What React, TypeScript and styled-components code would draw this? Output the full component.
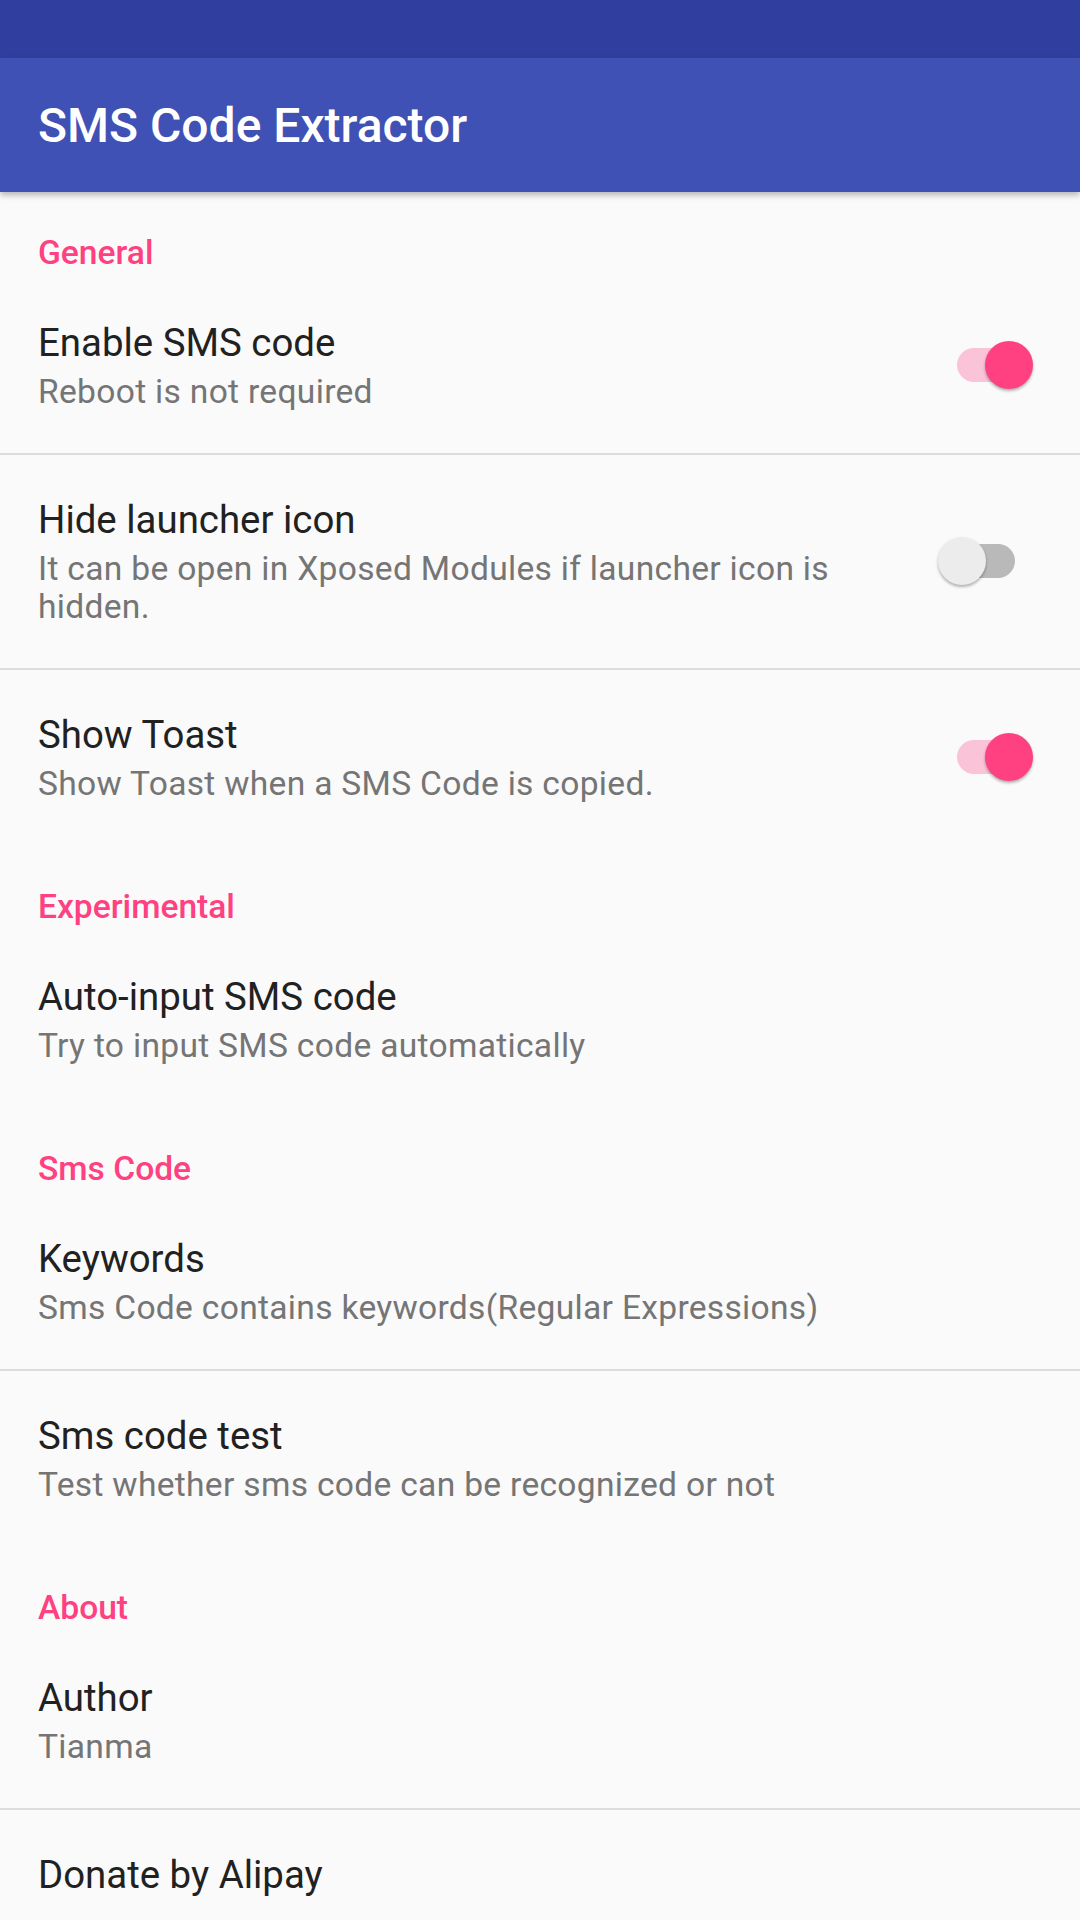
import React from 'react';
import styled, {createGlobalStyle} from 'styled-components';

const GlobalStyle = createGlobalStyle`
  html, body {
    margin: 0;
    padding: 0;
    background: #fafafa;
  }
  body {
    font-family: Roboto, "Noto Sans", "Liberation Sans", sans-serif;
  }
`;

const Screen = styled.div`
  display: flex;
  flex-direction: column;
  width: 1080px;
  height: 1920px;
  overflow: hidden;
  background: #fafafa;
`;

const StatusBar = styled.div`
  height: 58px;
  background: #303f9f;
  flex-shrink: 0;
`;

const Toolbar = styled.div`
  display: flex;
  align-items: center;
  height: 134px;
  padding: 0 38px;
  background: #3f51b5;
  box-shadow: 0 3px 6px rgba(0, 0, 0, 0.28);
  position: relative;
  z-index: 1;
  flex-shrink: 0;
`;

const Title = styled.div`
  color: #fff;
  font-size: 48px;
  font-weight: 500;
`;

const List = styled.div`
  display: flex;
  flex-direction: column;
`;

const Category = styled.div`
  padding: 44px 38px 7px;
  font-size: 33.6px;
  line-height: 34px;
  font-weight: 500;
  color: #ff4081;
`;

const Row = styled.div`
  display: flex;
  align-items: center;
  padding: 42px 47px 43px 38px;
`;

const Texts = styled.div`
  display: flex;
  flex-direction: column;
  flex: 1;
  min-width: 0;
`;

const ItemTitle = styled.div`
  font-size: 38.4px;
  line-height: 48px;
  color: #212121;
`;

const Summary = styled.div`
  margin-top: 6px;
  font-size: 33.6px;
  line-height: 38px;
  letter-spacing: 0.3px;
  color: #757575;
`;

const Divider = styled.div`
  height: 2px;
  margin-top: -1px;
  margin-bottom: -1px;
  background: #dcdcdc;
`;

const SwitchBox = styled.div`
  position: relative;
  width: 95px;
  height: 48px;
  margin-left: 32px;
  flex-shrink: 0;
`;

const Track = styled.div<{$on: boolean}>`
  position: absolute;
  left: 19px;
  top: 7px;
  width: 58px;
  height: 34px;
  border-radius: 17px;
  background: ${(p) => (p.$on ? '#fac3d7' : '#b9b9b9')};
`;

const Thumb = styled.div<{$on: boolean}>`
  position: absolute;
  top: 0;
  left: ${(p) => (p.$on ? '47px' : '0')};
  width: 48px;
  height: 48px;
  border-radius: 50%;
  background: ${(p) => (p.$on ? '#ff4081' : '#ececec')};
  box-shadow: 0 2px 3px rgba(0, 0, 0, 0.3);
`;

const Switch = ({on}: {on: boolean}) => (
  <SwitchBox>
    <Track $on={on} />
    <Thumb $on={on} />
  </SwitchBox>
);

type Item = {title: string; summary?: string; toggle?: boolean};
type Section = {name: string; items: Item[]};

const sections: Section[] = [
  {
    name: 'General',
    items: [
      {title: 'Enable SMS code', summary: 'Reboot is not required', toggle: true},
      {title: 'Hide launcher icon', summary: 'It can be open in Xposed Modules if launcher icon is hidden.', toggle: false},
      {title: 'Show Toast', summary: 'Show Toast when a SMS Code is copied.', toggle: true},
    ],
  },
  {
    name: 'Experimental',
    items: [{title: 'Auto-input SMS code', summary: 'Try to input SMS code automatically'}],
  },
  {
    name: 'Sms Code',
    items: [
      {title: 'Keywords', summary: 'Sms Code contains keywords(Regular Expressions)'},
      {title: 'Sms code test', summary: 'Test whether sms code can be recognized or not'},
    ],
  },
  {
    name: 'About',
    items: [
      {title: 'Author', summary: 'Tianma'},
      {title: 'Donate by Alipay'},
    ],
  },
];

const App = () => {
  return (
    <Screen>
      <GlobalStyle />
      <StatusBar />
      <Toolbar>
        <Title>SMS Code Extractor</Title>
      </Toolbar>
      <List>
        {sections.map((section) => (
          <React.Fragment key={section.name}>
            <Category>{section.name}</Category>
            {section.items.map((item, i) => (
              <React.Fragment key={item.title}>
                {i > 0 && <Divider />}
                <Row>
                  <Texts>
                    <ItemTitle>{item.title}</ItemTitle>
                    {item.summary && <Summary>{item.summary}</Summary>}
                  </Texts>
                  {item.toggle !== undefined && <Switch on={item.toggle} />}
                </Row>
              </React.Fragment>
            ))}
          </React.Fragment>
        ))}
      </List>
    </Screen>
  );
};

export default App;
